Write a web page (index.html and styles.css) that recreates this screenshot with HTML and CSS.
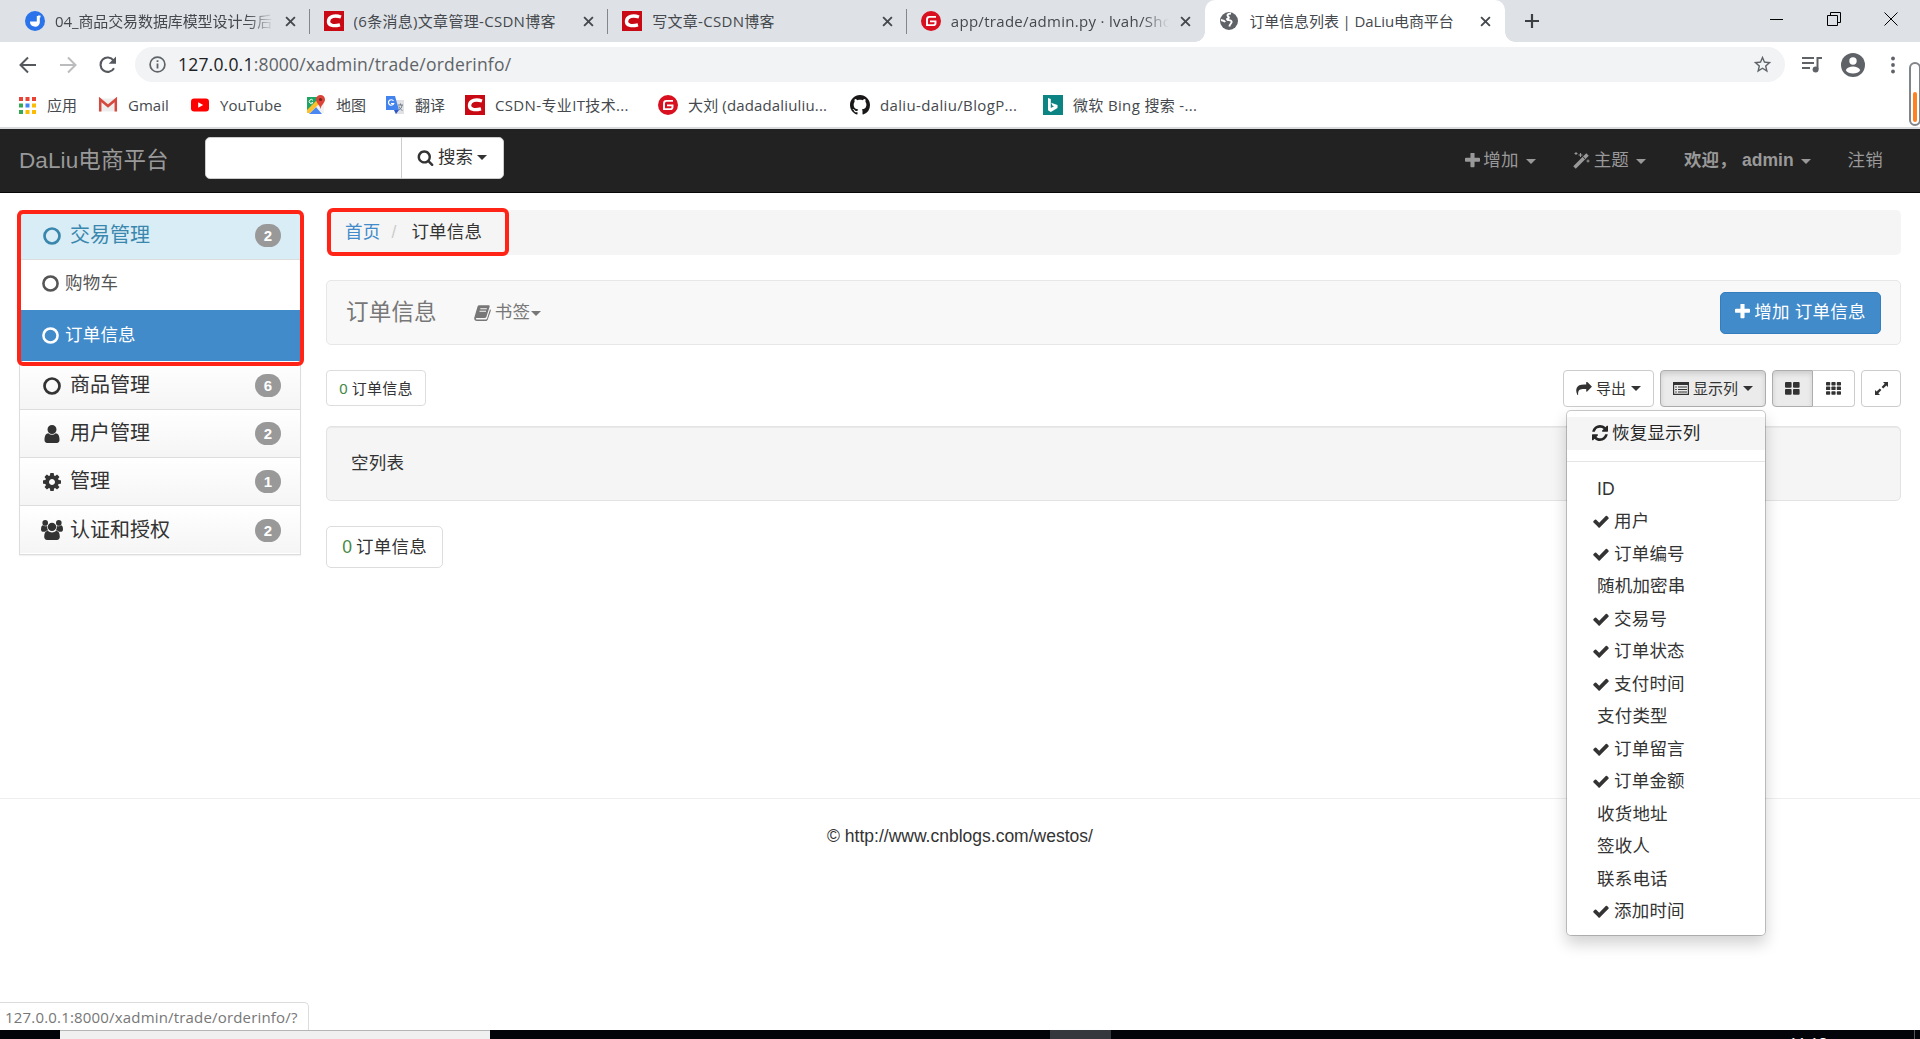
FILE: index.html
```html
<!DOCTYPE html>
<html lang="zh-CN">
<head>
  <meta charset="UTF-8">
  <title>订单信息列表 | DaLiu电商平台</title>
  <link rel="stylesheet" href="styles.css">
</head>
<body>
<svg class="sprite">
  <symbol id="i-close" viewBox="0 0 10 10"><path d="M1 1l8 8M9 1l-8 8" stroke="currentColor" stroke-width="1.7" fill="none"/></symbol>
  <symbol id="i-csdn" viewBox="0 0 20 20"><path fill="#c90a14" d="M0 0h20v20H0z"/><path d="M17 6C11 4 5 5 4.500 10.200c-.4 5 6 5 11.500 3.600" fill="none" stroke="#fff" stroke-width="3.400"/></symbol>
  <symbol id="i-gitee" viewBox="0 0 20 20"><circle cx="10" cy="10" r="10" fill="#d8101f"/><path d="M15 5.900H8.500Q6 5.900 6 8.400v5.700h6.300q2.200 0 2.200-2.200v-1.500H9" fill="none" stroke="#fff" stroke-width="1.900"/></symbol>
  <symbol id="i-search" viewBox="0 0 1792 1792"><path fill="currentColor" d="M1216 832q0-185-131.500-316.500t-316.500-131.500-316.500 131.500-131.500 316.500 131.500 316.500 316.500 131.500 316.500-131.500 131.500-316.500zm512 832q0 52-38 90t-90 38q-54 0-90-38l-343-342q-179 124-399 124-143 0-273.500-55.500t-225-150-150-225-55.500-273.500 55.500-273.500 150-225 225-150 273.500-55.500 273.500 55.500 225 150 150 225 55.500 273.500q0 220-124 399l343 343q37 37 37 90z"/></symbol>
  <symbol id="i-plus" viewBox="192 192 1408 1408"><path fill="currentColor" d="M1600 736v192q0 40-28 68t-68 28h-416v416q0 40-28 68t-68 28h-192q-40 0-68-28t-28-68v-416h-416q-40 0-68-28t-28-68v-192q0-40 28-68t68-28h416v-416q0-40 28-68t68-28h192q40 0 68 28t28 68v416h416q40 0 68 28t28 68z"/></symbol>
  <symbol id="i-check" viewBox="121 250 1550 1300"><path fill="currentColor" d="M1671 566q0 40-28 68l-724 724-136 136q-28 28-68 28t-68-28l-136-136-362-362q-28-28-28-68t28-68l136-136q28-28 68-28t68 28l294 295 656-657q28-28 68-28t68 28l136 136q28 28 28 68z"/></symbol>
  <symbol id="i-circle" viewBox="0 0 18 18"><circle cx="9" cy="9" r="7.500" fill="none" stroke="currentColor" stroke-width="2.700"/></symbol>
  <symbol id="i-user" viewBox="128 128 1536 1536"><path fill="currentColor" d="M1536 1399q0 109-62.500 187t-150.500 78h-854q-88 0-150.500-78t-62.500-187q0-85 8.500-160.500t31.500-152 58.500-131 94-89 134.500-34.500q131 128 313 128t313-128q76 0 134.500 34.500t94 89 58.500 131 31.500 152 8.500 160.500zm-256-887q0 159-112.500 271.500t-271.500 112.500-271.500-112.500-112.500-271.500 112.500-271.500 271.500-112.500 271.500 112.500 112.500 271.500z"/></symbol>
  <symbol id="i-cog" viewBox="128 128 1536 1536"><path fill="currentColor" d="M1152 896q0-106-75-181t-181-75-181 75-75 181 75 181 181 75 181-75 75-181zm512-109v222q0 12-8 23t-20 13l-185 28q-19 54-39 91 35 50 107 138 10 12 10 25t-9 23q-27 37-99 108t-94 71q-12 0-26-9l-138-108q-44 23-91 38-16 136-29 186-7 28-36 28h-222q-14 0-24.500-8.500t-11.500-21.500l-28-184q-49-16-90-37l-141 107q-10 9-25 9-14 0-25-11-126-114-165-168-7-10-7-23 0-12 8-23 15-21 51-66.500t54-70.500q-27-50-41-99l-183-27q-13-2-21-12.500t-8-23.500v-222q0-12 8-23t19-13l186-28q14-46 39-92-40-57-107-138-10-12-10-24 0-10 9-23 26-36 98.500-107.500t94.500-71.500q13 0 26 10l138 107q44-23 91-38 16-136 29-186 7-28 36-28h222q14 0 24.500 8.500t11.500 21.500l28 184q49 16 90 37l142-107q9-9 24-9 13 0 25 10 129 119 165 170 7 8 7 22 0 12-8 23-15 21-51 66.500t-54 70.500q26 50 41 98l183 28q13 2 21 12.500t8 23.500z"/></symbol>
  <symbol id="i-group" viewBox="0 0 22 20"><g fill="currentColor"><circle cx="4.200" cy="2.900" r="2.800"/><circle cx="17.800" cy="2.900" r="2.800"/><path d="M0 9.200C0 6.500 1 5.300 2 5.300c2 1.300 3 1 4.300.6-.4 2.300.4 3.800 1 4.600-1.600 0-2.500.5-3.200 1.300H2.500C1 11.800 0 11 0 9.200zM22 9.200c0-2.700-1-3.900-2-3.900-2 1.300-3 1-4.300.6.4 2.300-.4 3.800-1 4.600 1.600 0 2.500.5 3.200 1.300h1.600c1.500 0 2.500-.8 2.500-2.600z"/><circle cx="11" cy="6.900" r="4.200"/><path d="M3.200 16.800c0-4 1.400-6 3.600-6 2.600 2.300 5.800 2.300 8.400 0 2.200 0 3.600 2 3.600 6 0 2-1.100 3.200-2.900 3.200H6.100c-1.800 0-2.900-1.200-2.900-3.200z"/></g></symbol>
  <symbol id="i-refresh" viewBox="128 128 1536 1536"><path fill="currentColor" d="M1639 1056q0 5-1 7-64 268-268 434.500t-478 166.500q-146 0-282.500-55t-243.500-157l-129 129q-19 19-45 19t-45-19-19-45v-448q0-26 19-45t45-19h448q26 0 45 19t19 45-19 45l-137 137q71 66 161 102t187 36q134 0 250-65t186-179q11-17 53-117 8-23 30-23h192q13 0 22.500 9.500t9.500 22.500zm25-800v448q0 26-19 45t-45 19h-448q-26 0-45-19t-19-45 19-45l138-138q-148-137-349-137-134 0-250 65t-186 179q-11 17-53 117-8 23-30 23h-199q-13 0-22.500-9.500t-9.500-22.500v-7q65-268 270-434.500t480-166.500q146 0 284 55.500t245 156.500l130-129q19-19 45-19t45 19 19 45z"/></symbol>
  <symbol id="i-share" viewBox="0 100 1792 1500"><path fill="currentColor" d="M1792 640q0 26-19 45l-512 512q-19 19-45 19t-45-19-19-45v-256h-224q-98 0-175.500 6t-154 21.500-133 42.500-105.500 69.500-80 101-48.500 138.500-17.500 181q0 55 5 123 0 6 2.500 23.500t2.500 26.500q0 15-8.500 25t-23.500 10q-16 0-28-17-7-9-13-22t-13.500-30-10.500-24q-127-285-127-451 0-199 53-333 162-403 875-403h224v-256q0-26 19-45t45-19 45 19l512 512q19 19 19 45z"/></symbol>
  <symbol id="i-wand" viewBox="0 0 17 17"><path d="M1.500 15.500L14.500 2.500" stroke="currentColor" stroke-width="3.600"/><path d="M10.200 5l1.800 1.800" stroke="#222" stroke-width="1"/><path d="M3 0v3M1.500 1.500h3M7.500 1v4M5.500 3h4M15 7.500v3M13.500 9h3" stroke="currentColor" stroke-width="1"/></symbol>
  <symbol id="i-book" viewBox="0 0 17 16"><path fill="currentColor" d="M5.300.3h9.300c.9 0 1.300.6 1 1.500l-3.200 9.900c-.3.800-.8 1.200-1.700 1.200H2.600c-.8 0-1 .8-.5 1.300.3.300.7.400 1.300.4h8.500c.5 0 .9-.3 1.100-.8L16 4.200c.7.300 1 .9.700 1.700l-2.900 8.600c-.3.900-1.100 1.500-2 1.500H3C1.200 16 0 14.700.2 13L3.400 1.900C3.700.9 4.400.3 5.300.3z"/><path d="M6.300 3.700h6.500M5.500 6.200H12" stroke="#f8f8f8" stroke-width="1.100"/></symbol>
</svg>

<!-- browser window -->
<header class="tabs">
  <div class="tab">
    <svg class="fav" viewBox="0 0 20 20"><circle cx="10" cy="10" r="10" fill="#2a73ea"/><path d="M5 10.500a5 5 0 0 0 9.800 1.500V5h-3v5.500z" fill="#fff"/><path d="M13 4.500h2.500v2H13z" fill="#fff"/></svg>
    <span class="tab-title fade">04_商品交易数据库模型设计与后</span>
    <svg class="close"><use href="#i-close"/></svg>
  </div>
  <div class="tab">
    <svg class="fav"><use href="#i-csdn"/></svg>
    <span class="tab-title wide">(6条消息)文章管理-CSDN博客</span>
    <svg class="close"><use href="#i-close"/></svg>
  </div>
  <div class="tab">
    <svg class="fav"><use href="#i-csdn"/></svg>
    <span class="tab-title wide">写文章-CSDN博客</span>
    <svg class="close"><use href="#i-close"/></svg>
  </div>
  <div class="tab last">
    <svg class="fav"><use href="#i-gitee"/></svg>
    <span class="tab-title wide fade">app/trade/admin.py · lvah/Sho</span>
    <svg class="close"><use href="#i-close"/></svg>
  </div>
  <div class="tab active">
    <svg class="fav" viewBox="0 0 20 20"><circle cx="10" cy="10" r="9" fill="#5f6368"/><path d="M12 2.500c-3.500 0-4.500 2-2.500 3.200 1 .8 0 1.600-1 1.800-1.200.6 0 1.600 1.500 1.600s3 .8 2.600 2.200c-.4 1.400-1.700 1.800-2.300 4.200M2 9c1.500.3 3.500.8 4.200 2" fill="none" stroke="#fff" stroke-width="1.900"/></svg>
    <span class="tab-title">订单信息列表 | DaLiu电商平台</span>
    <svg class="close"><use href="#i-close"/></svg>
  </div>
  <svg class="new-tab" viewBox="0 0 16 16"><path d="M8 1v14M1 8h14" stroke="#3c4043" stroke-width="2.200"/></svg>
  <div class="win">
    <svg viewBox="0 0 14 14"><path d="M0 7.500h13" stroke="#000"/></svg>
    <svg viewBox="0 0 14 14"><path d="M.5 3.500h10v10H.5zM3.500 3.500v-3h10v10h-3" fill="none" stroke="#000"/></svg>
    <svg viewBox="0 0 14 14"><path d="M.5.5l13 13M13.500.5l-13 13" stroke="#000"/></svg>
  </div>
</header>
<div class="toolbar">
  <svg class="nav-i" viewBox="0 0 20 20"><path d="M18 10H3M10 2.500L2.500 10l7.500 7.500" fill="none" stroke="#55595e" stroke-width="2"/></svg>
  <svg class="nav-i" viewBox="0 0 20 20"><path d="M2 10h15M10 2.500l7.500 7.500-7.500 7.500" fill="none" stroke="#babcbe" stroke-width="2"/></svg>
  <svg class="nav-i" viewBox="0 0 20 20"><path d="M16 13.200A7.200 7.200 0 1 1 15.500 5.300" fill="none" stroke="#55595e" stroke-width="2.100"/><path fill="#55595e" d="M18 1.500v7.300h-7.300z"/></svg>
  <div class="omnibox">
    <svg class="info" viewBox="0 0 17 17"><circle cx="8.500" cy="8.500" r="7.400" fill="none" stroke="#5f6368" stroke-width="1.700"/><path d="M8.500 7.500v5M8.500 4.200v1.900" stroke="#5f6368" stroke-width="1.800"/></svg>
    <span class="url"><b>127.0.0.1</b>:8000/xadmin/trade/orderinfo/</span>
    <svg class="star" viewBox="0 0 24 24"><path fill="#5f6368" d="M22 9.240l-7.190-.62L12 2 9.190 8.630 2 9.240l5.460 4.730L5.820 21 12 17.270 18.180 21l-1.630-7.030L22 9.240zM12 15.400l-3.760 2.270 1-4.280-3.320-2.880 4.380-.38L12 6.100l1.710 4.040 4.380.38-3.320 2.880 1 4.280L12 15.400z"/></svg>
  </div>
  <svg class="t-music" viewBox="0 0 20 18"><path d="M0 2h12M0 7h12M0 12h8M15.500 13V2H20" fill="none" stroke="#5f6368" stroke-width="2"/><circle cx="13.600" cy="13.500" r="3" fill="#5f6368"/></svg>
  <svg class="t-user" viewBox="0 0 24 24"><circle cx="12" cy="12" r="12" fill="#5f6368"/><circle cx="12" cy="8" r="3.700" fill="#fff"/><path d="M4.800 17.200c2-5 12.400-5 14.400 0-2.500 4.300-11.900 4.300-14.400 0z" fill="#fff"/></svg>
  <svg class="t-dots" viewBox="0 0 4 18"><g fill="#5f6368"><circle cx="2" cy="2.500" r="1.900"/><circle cx="2" cy="9" r="1.900"/><circle cx="2" cy="15.500" r="1.900"/></g></svg>
</div>
<div class="bookmarks">
  <a class="bm apps"><svg viewBox="0 0 17 17"><path fill="#ea4335" d="M0 0h4v4H0zM6.500 0h4v4h-4zM13 0h4v4h-4z"/><path fill="#34a853" d="M0 6.500h4v4H0z"/><path fill="#4285f4" d="M6.500 6.500h4v4h-4z"/><path fill="#fbbc05" d="M13 6.500h4v4h-4zM6.500 13h4v4h-4zM13 13h4v4h-4z"/><path fill="#34a853" d="M0 13h4v4H0z"/></svg>应用</a>
  <a class="bm gmail"><svg viewBox="0 0 20 20"><path fill="#eee" d="M1 3.500h18v13H1z"/><path d="M2.200 16.500v-12l7.800 6.500 7.800-6.500v12" fill="none" stroke="#d5493e" stroke-width="2.500"/></svg>Gmail</a>
  <a class="bm youtube"><svg viewBox="0 0 20 20"><rect x="1" y="3.500" width="18" height="13" rx="3.200" fill="#f00"/><path d="M8.200 7.200l5 2.800-5 2.800z" fill="#fff"/></svg>YouTube</a>
  <a class="bm maps"><svg viewBox="0 0 20 20"><path fill="#1fa463" d="M1 2h17L2 18H1z"/><path fill="#f2f2f2" d="M18 4v14h-2l-7-7z"/><path fill="#4a89f3" d="M3 19l7-7 6 7z"/><path fill="#fbc02d" d="M1 15L13 3l3 3L4 18H1z"/><path fill="#db4437" d="M14.500 0a4.500 4.500 0 0 1 4.500 4.500c0 3.500-3.700 5-4.500 9.500-.8-4.500-4.500-6-4.500-9.500A4.500 4.500 0 0 1 14.500 0z"/><circle cx="14.500" cy="4.500" r="1.600" fill="#7b231d"/><path d="M7 5.500a2 2 0 1 0 0 2H5.500" fill="none" stroke="#fff"/></svg>地图</a>
  <a class="bm translate"><svg viewBox="0 0 20 20"><path fill="#dfe1e4" d="M7 5h12v14H10z"/><path fill="#4383ed" d="M1 1h9l4 14H1z"/><path fill="#2a56c6" d="M9 15h5l-3 4z"/><path d="M8.500 6a2.700 2.700 0 1 0 .2 2.500H6" fill="none" stroke="#fff" stroke-width="1.200"/><path d="M13 10h5M15.500 8.500V10M17 10c0 3-2 4-3 5M14 11.500c.5 2 2 3 3.500 4" fill="none" stroke="#707b85"/></svg>翻译</a>
  <a class="bm csdn wide"><svg><use href="#i-csdn"/></svg>CSDN-专业IT技术...</a>
  <a class="bm gitee"><svg><use href="#i-gitee"/></svg>大刘 (dadadaliuliu...</a>
  <a class="bm github wide"><svg viewBox="0 0 16 16"><path fill="#191717" d="M8 0C3.580 0 0 3.580 0 8c0 3.540 2.290 6.530 5.470 7.590.4.070.55-.17.55-.38 0-.19-.01-.82-.01-1.490-2.010.37-2.530-.49-2.690-.94-.09-.23-.48-.94-.82-1.130-.28-.15-.68-.52-.01-.53.63-.01 1.080.58 1.230.82.72 1.210 1.870.87 2.330.66.07-.52.28-.87.51-1.070-1.780-.2-3.640-.89-3.640-3.950 0-.87.31-1.590.82-2.150-.08-.2-.36-1.020.08-2.120 0 0 .67-.21 2.200.82.64-.18 1.320-.27 2-.27s1.360.09 2 .27c1.530-1.040 2.200-.82 2.200-.82.44 1.100.16 1.920.08 2.120.51.56.82 1.270.82 2.150 0 3.070-1.870 3.750-3.650 3.950.29.25.54.73.54 1.480 0 1.070-.01 1.930-.01 2.200 0 .21.15.46.55.38A8.013 8.013 0 0 0 16 8c0-4.420-3.580-8-8-8z"/></svg>daliu-daliu/BlogP...</a>
  <a class="bm bing wide"><svg viewBox="0 0 20 20"><path fill="#0c8484" d="M0 0h20v20H0z"/><path fill="#fff" d="M5 3l2.800 1v9l3.200-1.700-1.700-.9-1.100-2.700 6.300 2.300v3L7.800 17 5 15.300z"/></svg>微软 Bing 搜索 -...</a>
  <span class="meter"><i></i></span>
</div>

<!-- page -->
<nav class="navbar">
  <a class="brand">DaLiu电商平台</a>
  <div class="search">
    <input type="text">
    <button type="button"><svg><use href="#i-search"/></svg>搜索<i class="caret"></i></button>
  </div>
  <ul class="menu">
    <li class="m-add"><svg><use href="#i-plus"/></svg>增加<i class="caret"></i></li>
    <li class="m-theme"><svg><use href="#i-wand"/></svg>主题<i class="caret"></i></li>
    <li class="m-user"><span>欢迎，</span>admin<i class="caret"></i></li>
    <li>注销</li>
  </ul>
</nav>

<div class="page">
  <aside class="sidebar">
    <div class="group open"><svg><use href="#i-circle"/></svg>交易管理<span class="badge">2</span></div>
    <a class="item"><svg><use href="#i-circle"/></svg>购物车</a>
    <a class="item current"><svg><use href="#i-circle"/></svg>订单信息</a>
    <div class="group first"><svg><use href="#i-circle"/></svg>商品管理<span class="badge">6</span></div>
    <div class="group"><svg><use href="#i-user"/></svg>用户管理<span class="badge">2</span></div>
    <div class="group"><svg><use href="#i-cog"/></svg>管理<span class="badge">1</span></div>
    <div class="group users"><svg><use href="#i-group"/></svg>认证和授权<span class="badge">2</span></div>
    <span class="mark"></span>
  </aside>

  <main class="content">
    <div class="breadcrumb">
      <a>首页</a><span class="sep">/</span><span>订单信息</span>
      <span class="mark"></span>
    </div>

    <div class="title-bar">
      <h1>订单信息</h1>
      <a class="bookmark"><svg><use href="#i-book"/></svg>书签<i class="caret"></i></a>
      <button class="btn-primary"><svg><use href="#i-plus"/></svg>增加 订单信息</button>
    </div>

    <div class="tools">
      <span class="count"><em>0</em> 订单信息</span>
      <div class="tool-btns">
        <button class="btn export"><svg><use href="#i-share"/></svg>导出<i class="caret"></i></button>
        <div class="dropdown">
          <button class="btn columns on"><svg viewBox="0 0 16 13"><path d="M.6.6h14.800v11.800H.6z" fill="none" stroke="currentColor" stroke-width="1.200"/><path d="M0 0h16v3H0z" fill="currentColor"/><path d="M2.200 5h1.600M2.200 7.500h1.600M2.200 10h1.600M5 5h9M5 7.500h9M5 10h9" stroke="currentColor" stroke-width="1.200"/></svg>显示列<i class="caret"></i></button>
          <ul class="dropdown-menu">
            <li class="reset"><svg><use href="#i-refresh"/></svg>恢复显示列</li>
            <li class="divider"></li>
            <li>ID</li>
            <li class="checked"><svg><use href="#i-check"/></svg>用户</li>
            <li class="checked"><svg><use href="#i-check"/></svg>订单编号</li>
            <li>随机加密串</li>
            <li class="checked"><svg><use href="#i-check"/></svg>交易号</li>
            <li class="checked"><svg><use href="#i-check"/></svg>订单状态</li>
            <li class="checked"><svg><use href="#i-check"/></svg>支付时间</li>
            <li>支付类型</li>
            <li class="checked"><svg><use href="#i-check"/></svg>订单留言</li>
            <li class="checked"><svg><use href="#i-check"/></svg>订单金额</li>
            <li>收货地址</li>
            <li>签收人</li>
            <li>联系电话</li>
            <li class="checked"><svg><use href="#i-check"/></svg>添加时间</li>
          </ul>
        </div>
        <div class="btn-group">
          <button class="btn on"><svg viewBox="0 0 15 13"><g fill="currentColor"><rect width="6.600" height="5.800" rx="1"/><rect x="8" width="6.600" height="5.800" rx="1"/><rect y="7" width="6.600" height="5.800" rx="1"/><rect x="8" y="7" width="6.600" height="5.800" rx="1"/></g></svg></button>
          <button class="btn"><svg viewBox="0 0 15 13"><g fill="currentColor"><rect width="4.200" height="3.500" rx=".7"/><rect x="5.400" width="4.200" height="3.500" rx=".7"/><rect x="10.800" width="4.200" height="3.500" rx=".7"/><rect y="4.600" width="4.200" height="3.500" rx=".7"/><rect x="5.400" y="4.600" width="4.200" height="3.500" rx=".7"/><rect x="10.800" y="4.600" width="4.200" height="3.500" rx=".7"/><rect y="9.200" width="4.200" height="3.500" rx=".7"/><rect x="5.400" y="9.200" width="4.200" height="3.500" rx=".7"/><rect x="10.800" y="9.200" width="4.200" height="3.500" rx=".7"/></g></svg></button>
        </div>
        <button class="btn full"><svg viewBox="0 0 13 13"><path d="M8 0h5v5l-1.600-1.600L8.200 6.500 6.600 4.900l3.100-3.200zM5 13H0V8l1.600 1.600L4.800 6.500l1.600 1.600-3.100 3.200z" fill="currentColor"/></svg></button>
      </div>
    </div>

    <div class="well">空列表</div>
    <span class="count big"><em>0</em> 订单信息</span>
  </main>
</div>

<footer>© http://www.cnblogs.com/westos/</footer>

<div class="status">127.0.0.1:8000/xadmin/trade/orderinfo/?</div>
<div class="taskbar"><span class="task-search"></span><span class="task-app"></span><span class="clock">11:18</span><span class="desk"></span></div>
</body>
</html>
```
FILE: styles.css
```css
* {
  box-sizing: border-box;
}
body {
  margin: 0;
  width: 1920px;
  height: 1039px;
  display: flex;
  flex-direction: column;
  overflow: hidden;
  background: #fff;
  color: #333;
  font: 17.5px/25px "Liberation Sans", "Noto Sans CJK SC", sans-serif;
}
ul {
  list-style: none;
  margin: 0;
  padding: 0;
}
svg {
  flex: none;
  display: block;
}
button, input {
  font: inherit;
  color: inherit;
  letter-spacing: inherit;
  margin: 0;
}
.sprite {
  position: absolute;
  width: 0;
  height: 0;
}
.caret {
  flex: none;
  border: 5px solid transparent;
  border-top-color: currentColor;
  border-bottom: 0;
}

/* tabs */
.tabs {
  flex: none;
  height: 42px;
  display: flex;
  align-items: center;
  padding-left: 11px;
  background: #dee1e6;
}
.tabs, .toolbar, .bookmarks, .status {
  font-family: "Open Sans", "Noto Sans CJK SC", sans-serif;
  color: #45494d;
}
.tab {
  width: 298.6px;
  height: 42px;
  display: flex;
  align-items: center;
  padding: 0 14px;
  position: relative;
  font-size: 15px;
}
.tab:not(.last):not(.active)::after {
  content: "";
  position: absolute;
  right: 0;
  top: 9px;
  height: 25px;
  border-right: 1px solid #83878c;
}
.fav {
  width: 20px;
  height: 20px;
}
.tab-title {
  flex: 1;
  margin: 0 11px 0 10px;
  white-space: nowrap;
  overflow: hidden;
  letter-spacing: -0.1px;
}
.tab-title.wide {
  letter-spacing: 0.3px;
}
.fade {
  -webkit-mask-image: linear-gradient(to right, #000 88%, transparent);
  mask-image: linear-gradient(to right, #000 88%, transparent);
}
.close {
  width: 11px;
  height: 11px;
}
.tab.active {
  width: 300px;
  background: #fff;
  border-radius: 10px 10px 0 0;
}
.tab.active::before {
  content: "";
  position: absolute;
  bottom: 0;
  left: -10px;
  width: 320px;
  height: 10px;
  background:
    radial-gradient(circle at 0 0, transparent 9.5px, #fff 10px) left / 10px 10px no-repeat,
    radial-gradient(circle at 100% 0, transparent 9.5px, #fff 10px) right / 10px 10px no-repeat;
}
.new-tab {
  width: 16px;
  margin-left: 19px;
}
.win {
  display: flex;
  gap: 43px;
  margin: 0 22px 5px auto;
}
.win svg {
  width: 14px;
  height: 14px;
}

/* address bar */
.toolbar {
  flex: none;
  height: 45px;
  display: flex;
  align-items: center;
  padding-left: 18px;
}
.nav-i {
  width: 20px;
  height: 20px;
  margin-right: 20px;
}
.omnibox {
  width: 1650px;
  height: 35px;
  margin-left: -3px;
  border-radius: 18px;
  background: #f1f3f4;
  display: flex;
  align-items: center;
  padding: 0 12px 0 14px;
}
.info {
  width: 17px;
  height: 17px;
}
.url {
  margin-left: 12px;
  font-size: 17.5px;
  letter-spacing: 0.2px;
  color: #5f6368;
}
.url b {
  color: #202124;
  font-weight: 400;
}
.star {
  width: 21px;
  margin-left: auto;
}
.t-music {
  width: 20px;
  margin-left: 17px;
}
.t-user {
  width: 24px;
  margin-left: 19px;
}
.t-dots {
  width: 4px;
  height: 18px;
  margin-left: 26px;
}

/* bookmarks */
.bookmarks {
  flex: none;
  height: 42px;
  display: flex;
  position: relative;
  padding: 0 0 4px 19px;
  border-bottom: 2px solid #d9dbde;
  font-size: 15px;
}
.bm {
  display: flex;
  align-items: center;
  gap: 10px;
  white-space: nowrap;
}
.bm.wide {
  letter-spacing: 0.35px;
}
.bm svg {
  width: 20px;
  height: 20px;
}
.apps { width: 79px; gap: 11px; }
.apps svg { width: 17px; height: 17px; }
.gmail { width: 92px; }
.youtube { width: 116px; }
.maps { width: 79px; }
.translate { width: 80px; }
.csdn { width: 193px; }
.gitee { width: 192px; letter-spacing: 0.15px; }
.github { width: 193px; }
.meter {
  position: absolute;
  right: -1px;
  top: -25px;
  width: 12px;
  height: 64px;
  padding: 28px 2px 2px;
  border: 2px solid #818488;
  border-radius: 6px;
  background: #fff;
}
.meter i {
  display: block;
  height: 30px;
  width: 4px;
  border-radius: 2px;
  background: #ff8020;
}

/* site navbar */
.navbar {
  flex: none;
  height: 64px;
  display: flex;
  align-items: center;
  padding: 0 37px 0 19px;
  background: #222;
  border-bottom: 1px solid #080808;
  color: #999;
}
.brand {
  width: 186px;
  font-size: 22.5px;
  letter-spacing: 0.1px;
  white-space: nowrap;
}
.search {
  display: flex;
  width: 299px;
  height: 42px;
  margin-bottom: 5px;
  color: #333;
}
.search input {
  width: 197px;
  border: 1px solid #ccc;
  border-radius: 5px 0 0 5px;
}
.search button {
  width: 103px;
  margin-left: -1px;
  padding: 0 0 2px 15px;
  display: flex;
  align-items: center;
  gap: 4px;
  background: #fff;
  border: 1px solid #ccc;
  border-radius: 0 5px 5px 0;
}
.search svg {
  width: 17px;
  height: 17px;
}
.menu {
  display: flex;
  margin-left: auto;
  letter-spacing: 0.2px;
}
.menu li {
  display: flex;
  align-items: center;
}
.menu svg {
  width: 15px;
  height: 15px;
  margin-right: 3px;
}
.menu .caret {
  margin: 2px 0 0 7px;
}
.m-add {
  margin-right: 37px;
}
.m-theme {
  margin-right: 38px;
}
.menu .m-theme svg {
  width: 17px;
  height: 17px;
  margin-right: 4px;
}
.m-user {
  margin-right: 37px;
  font-weight: bold;
  letter-spacing: 0;
}
.m-user span {
  width: 58px;
}

/* layout */
.page {
  flex: none;
  display: flex;
  gap: 25px;
  height: 605px;
  padding: 17px 19px 0;
  letter-spacing: 0.2px;
}
.mark {
  position: absolute;
  border: 4px solid #ff2416;
  border-radius: 6px;
  pointer-events: none;
}
.sidebar {
  position: relative;
  width: 282px;
  height: 345px;
  border: 1px solid #ddd;
  box-shadow: 0 1px 1px rgba(0, 0, 0, 0.05);
  letter-spacing: 0;
}
.sidebar .mark {
  left: -3px;
  top: -1px;
  width: 287px;
  height: 156px;
}
.group {
  height: 48px;
  display: flex;
  align-items: center;
  padding: 0 19px 0 23px;
  border-bottom: 1px solid #ddd;
  background: linear-gradient(#fff, #f5f5f5);
  font-size: 20px;
}
.group svg {
  width: 18px;
  height: 18px;
  margin-right: 9px;
}
.group.users {
  height: 47px;
  padding-top: 1px;
  border-bottom: 0;
}
.group.users svg {
  width: 22px;
  height: 20px;
  margin: 0 7px 0 -2px;
}
.group.open {
  height: 49px;
  padding-top: 1px;
  background: #d9edf7;
  color: #3a87ad;
}
.group.first {
  height: 49px;
  padding-top: 1px;
}
.item {
  height: 50px;
  display: flex;
  align-items: center;
  padding: 0 0 3px 22px;
  color: #555;
  letter-spacing: 0.2px;
}
.item svg {
  width: 17px;
  height: 17px;
  margin-right: 6px;
}
.item.current {
  height: 51px;
  background: #428bca;
  color: #fff;
  padding-bottom: 0;
}
.badge {
  width: 26px;
  height: 23px;
  margin-left: auto;
  border-radius: 12px;
  background: #999;
  color: #fff;
  font-size: 15px;
  font-weight: bold;
  line-height: 23px;
  text-align: center;
}

/* content */
.content {
  flex: 1;
}
.breadcrumb {
  position: relative;
  height: 45px;
  display: flex;
  align-items: center;
  padding: 0 0 0 19px;
  background: #f5f5f5;
  border-radius: 5px;
}
.breadcrumb a {
  color: #428bca;
}
.breadcrumb .sep {
  width: 31px;
  padding-left: 11px;
  color: #ccc;
}
.breadcrumb .mark {
  left: 1px;
  top: -2px;
  width: 182px;
  height: 48px;
}
.title-bar {
  display: flex;
  align-items: center;
  height: 65px;
  margin-top: 25px;
  padding: 0 19px 0 19px;
  border: 1px solid #e7e7e7;
  border-radius: 5px;
  background: #f8f8f8;
  color: #777;
}
h1 {
  margin: 0;
  font-size: 22.5px;
  font-weight: 400;
}
.bookmark {
  display: flex;
  align-items: center;
  margin-left: 37px;
}
.bookmark svg {
  width: 17px;
  height: 16px;
  margin-right: 4px;
}
.bookmark .caret {
  margin: 2px 0 0 1px;
}
.btn-primary {
  display: flex;
  align-items: center;
  justify-content: center;
  width: 161px;
  height: 42px;
  margin-left: auto;
  padding: 0 0 1px;
  border: 1px solid #357ebd;
  border-radius: 5px;
  background: #428bca;
  color: #fff;
  white-space: nowrap;
}
.btn-primary svg {
  width: 15px;
  height: 15px;
  margin: 0 4px 1px 0;
}
.tools {
  display: flex;
  justify-content: space-between;
  margin-top: 25px;
}
.count {
  display: inline-flex;
  align-items: center;
  justify-content: center;
  gap: 4px;
  width: 100px;
  height: 36px;
  border: 1px solid #ddd;
  border-radius: 4px;
  font-size: 15px;
}
.count em {
  font-style: normal;
  color: #468847;
}
.count.big {
  width: 117px;
  height: 42px;
  margin-top: 25px;
  border-radius: 5px;
  font-size: 17.5px;
}
.tool-btns {
  display: flex;
  gap: 6px;
  letter-spacing: 0;
}
.btn {
  display: flex;
  align-items: center;
  justify-content: center;
  height: 37px;
  padding: 0;
  border: 1px solid #ccc;
  border-radius: 4px;
  background: #fff;
  font-size: 15px;
}
.btn svg {
  width: 15px;
  height: 13px;
}
.btn.on {
  background: #ebebeb;
  border-color: #adadad;
  box-shadow: inset 0 3px 5px rgba(0, 0, 0, 0.125);
}
.btn .caret {
  margin-left: 5px;
}
.export {
  width: 91px;
}
.export svg, .columns svg {
  width: 16px;
  margin-right: 4px;
}
.columns {
  width: 106px;
}
.btn-group {
  display: flex;
}
.btn-group .btn {
  width: 41px;
}
.btn-group .btn:first-child {
  border-radius: 4px 0 0 4px;
}
.btn-group .btn:last-child {
  border-radius: 0 4px 4px 0;
  border-left: 0;
  width: 42px;
}
.full {
  width: 40px;
}
.dropdown {
  position: relative;
}
.dropdown-menu {
  position: absolute;
  z-index: 5;
  right: 0;
  top: 40px;
  width: 200px;
  height: 526px;
  padding-top: 6px;
  border: 1px solid rgba(0, 0, 0, 0.2);
  border-radius: 5px;
  background: #fff;
  background-clip: padding-box;
  box-shadow: 0 8px 15px rgba(0, 0, 0, 0.175);
  letter-spacing: 0.2px;
}
.dropdown-menu li {
  display: flex;
  align-items: center;
  height: 32.5px;
  padding: 0 0 0 30px;
}
.dropdown-menu .checked {
  padding-left: 26px;
}
.dropdown-menu .checked svg {
  width: 16px;
  height: 13px;
  margin-right: 5px;
}
.dropdown-menu .reset {
  height: 33px;
  padding: 0 0 1px 25px;
  background: #f5f5f5;
  color: #262626;
}
.reset svg {
  width: 16px;
  height: 16px;
  margin-right: 4px;
}
.dropdown-menu .divider {
  height: 1px;
  margin: 11px 0;
  padding: 0;
  background: #e5e5e5;
}
.well {
  height: 75px;
  margin-top: 19px;
  padding: 24px 24px;
  border: 1px solid #e3e3e3;
  border-radius: 5px;
  background: #f5f5f5;
  box-shadow: inset 0 1px 1px rgba(0, 0, 0, 0.05);
}
footer {
  flex: 1;
  padding-top: 25px;
  border-top: 1px solid #eee;
  text-align: center;
}

/* bottom of the screen */
.status {
  width: 309px;
  height: 28px;
  padding-left: 5px;
  border: 1px solid #dcdcdc;
  border-width: 1px 1px 0 0;
  border-radius: 0 5px 0 0;
  color: #777;
  font-size: 15px;
  line-height: 29px;
  letter-spacing: 0.18px;
}
.taskbar {
  flex: none;
  height: 9px;
  display: flex;
  background: #02040a;
  overflow: hidden;
}
.task-search {
  width: 430px;
  margin-left: 60px;
  background: #f0f0f0;
  border-top: 1px solid #b5b5b5;
}
.task-app {
  width: 61px;
  margin-left: 560px;
  background: #35393d;
}
.clock {
  margin-left: 678px;
  color: #fff;
  font: 15px/24px "Open Sans", sans-serif;
}
.desk {
  width: 1px;
  margin: 0 5px 0 auto;
  background: #555;
}
```
